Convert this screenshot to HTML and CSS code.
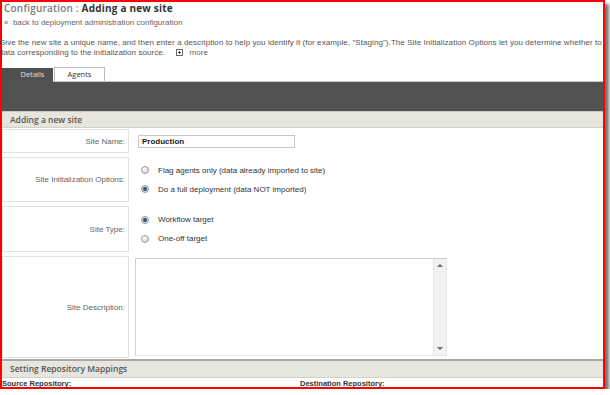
FILE: index.html
```html
<!DOCTYPE html>
<html>
<head>
<meta charset="utf-8">
<link rel="stylesheet" href="styles.css">
</head>
<body>
<div class="frame">
  <h1 class="title"><span class="crumb">Configuration :</span> <span class="page">Adding a new site</span></h1>
  <div class="back">«&nbsp; back to deployment administration configuration</div>
  <p class="desc">Give the new site a unique name, and then enter a description to help you identify it (for example, "Staging").The Site Initialization Options let you determine whether to<br>data corresponding to the initialization source. <span class="more"><span class="plus"></span>more</span></p>
  <div class="tabs">
    <div class="tab active">Details</div>
    <div class="tab">Agents</div>
  </div>
  <div class="bar"></div>
  <div class="section-head">Adding a new site</div>
  <div class="form">
    <div class="label r1">Site Name:</div>
    <div class="value"><div class="input">Production</div></div>

    <div class="label r2">Site Initialization Options:</div>
    <div class="value options">
      <div class="opt"><span class="radio"></span>Flag agents only (data already imported to site)</div>
      <div class="opt"><span class="radio on"></span>Do a full deployment (data NOT imported)</div>
    </div>

    <div class="label r3">Site Type:</div>
    <div class="value options">
      <div class="opt"><span class="radio on"></span>Workflow target</div>
      <div class="opt"><span class="radio"></span>One-off target</div>
    </div>

    <div class="label r4">Site Description:</div>
    <div class="value">
      <div class="textarea">
        <div class="scroll"><span class="arr up"></span><span class="arr down"></span></div>
      </div>
    </div>
  </div>
  <div class="section-head second">Setting Repository Mappings</div>
  <div class="repos">
    <div class="repo">Source Repository:</div>
    <div class="repo">Destination Repository:</div>
  </div>
</div>
</body>
</html>
```

FILE: styles.css
```css
* { box-sizing: border-box; }
html, body { margin: 0; padding: 0; background: #fff; }
.frame {
  width: 605px;
  height: 389px;
  padding: 2px;
  overflow: hidden;
  box-shadow: inset 0 0 0 2px #f00, 4px 4px 3px rgba(0,0,0,0.55);
  font-family: "Liberation Sans", Arial, sans-serif;
  font-size: 8px;
  color: #555;
}
.title {
  margin: 0 0 0 2px;
  font-family: "Open Sans", sans-serif;
  font-size: 10px;
  line-height: 13px;
  font-weight: 400;
  letter-spacing: 0.2px;
}
.crumb { color: #7c7c7c; font-weight: 600; }
.page { color: #333; font-weight: 700; }
.back {
  margin: 3px 0 0 2px;
  line-height: 10px;
  color: #666;
}
.desc {
  margin: 10px 0 0 -3px;
  width: 606px;
  line-height: 10px;
  white-space: nowrap;
  letter-spacing: 0.07px;
  color: #555;
}
.more { margin-left: 9px; color: #666; }
.plus {
  display: inline-block;
  width: 7px; height: 7px;
  border: 1px solid #666;
  margin-right: 6px;
  vertical-align: -1px;
  background:
    linear-gradient(#444,#444) center/3px 1px no-repeat,
    linear-gradient(#444,#444) center/1px 3px no-repeat;
}
.tabs {
  margin-top: 9px;
  height: 15px;
  display: flex;
  align-items: flex-end;
  border-bottom: 1px solid #c8c8c8;
}
.tab {
  font-family: "Open Sans", sans-serif;
  font-size: 7.5px;
  line-height: 13px;
  height: 14px;
  width: 51px;
  margin-left: 1px;
  text-align: center;
  color: #333;
  background: #fff;
  border: 1px solid #bbb;
  border-bottom: none;
}
.tab.active {
  margin-left: 0;
  height: 14px;
  margin-bottom: -1px;
  border: none;
  background: #505050;
  color: #e0e0e0;
  padding-left: 10px;
}
.bar {
  height: 30px;
  background: #525252;
  border-bottom: 1px solid #c9c9c4;
}
.section-head {
  height: 16px;
  background: #e6e6de;
  border-bottom: 1px solid #d2d2ca;
  padding-left: 8px;
  font-family: "Open Sans", sans-serif;
  font-size: 8.5px;
  font-weight: 600;
  line-height: 15px;
  color: #555;
}
.form {
  margin-top: 1px;
  display: grid;
  grid-template-columns: 127px 1fr;
  grid-template-rows: 24px 45px 46px 102px;
  column-gap: 6px;
  row-gap: 4px;
}
.label {
  border: 1px solid #e2e2e2;
  display: flex;
  align-items: center;
  justify-content: flex-end;
  padding-right: 3px;
  color: #666;
}
.value { display: flex; align-items: center; }
.input {
  margin-left: 3px;
  width: 157px;
  height: 13px;
  border: 1px solid #c8c8c8;
  padding-left: 3px;
  font-weight: 700;
  color: #222;
  line-height: 11px;
}
.options {
  flex-direction: column;
  justify-content: center;
  align-items: flex-start;
  gap: 9px;
}
.opt {
  display: flex;
  align-items: center;
  height: 10px;
  padding-left: 6px;
  color: #333;
}
.radio {
  width: 8px; height: 8px;
  border-radius: 50%;
  border: 1px solid #9a9a9a;
  background: radial-gradient(circle at 40% 35%, #fff 0, #e4e4e4 50%, #c8c8c8 100%);
  margin-right: 9px;
}
.radio.on {
  background: radial-gradient(circle, #1d4f7a 0, #2c5f8c 1.5px, #d8d8d8 2.5px, #c0c0c0 100%);
}
.value.desc-cell { align-items: flex-start; }
.value:has(.textarea) { align-items: flex-start; }
.textarea {
  margin-top: 2px;
  width: 312px;
  height: 98px;
  border: 1px solid #cfcfcf;
  border-bottom-color: #e6e6e6;
  border-right-color: #e6e6e6;
  display: flex;
  justify-content: flex-end;
}
.scroll {
  width: 13px;
  height: 100%;
  background: #f1f1f1;
  border-left: 1px solid #e6e6e6;
  display: flex;
  flex-direction: column;
  justify-content: space-between;
  align-items: center;
  padding: 5px 0;
}
.arr {
  width: 0; height: 0;
  border-left: 3px solid transparent;
  border-right: 3px solid transparent;
}
.arr.up { border-bottom: 3px solid #666; }
.arr.down { border-top: 3px solid #666; }
.section-head.second {
  margin-top: 1px;
  border-top: 2px solid #a8a8a8;
  height: 19px;
  line-height: 16px;
}
.repos {
  display: grid;
  grid-template-columns: 298px 1fr;
  line-height: 11px;
}
.repo {
  font-weight: 700;
  color: #333;
  font-size: 7.5px;
}
```
